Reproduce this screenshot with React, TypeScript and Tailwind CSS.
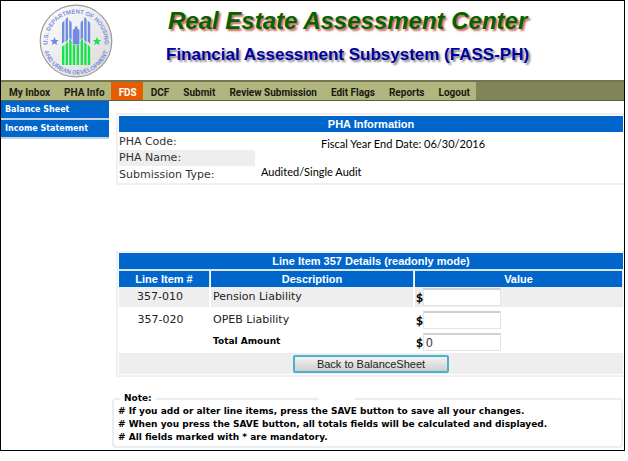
const navItems = ['My Inbox', 'PHA Info', 'FDS', 'DCF', 'Submit', 'Review Submission', 'Edit Flags', 'Reports', 'Logout'];

const notes = [
  '# If you add or alter line items, press the SAVE button to save all your changes.',
  '# When you press the SAVE button, all totals fields will be calculated and displayed.',
  '# All fields marked with * are mandatory.',
];

const verdana = "font-['DejaVu_Sans',Verdana,sans-serif]";
const arial = "font-['Liberation_Sans',Arial,sans-serif]";
const roboto = 'font-[Roboto,Arial,sans-serif]';
const calibri = 'font-[Lato,Calibri,sans-serif]';

function Seal() {
  return (
    <svg viewBox="0 0 74 74" className="size-[74px] shrink-0" role="img" aria-label="U.S. Department of Housing and Urban Development">
      <defs>
        <linearGradient id="sealFill" x1="0" y1="0" x2="1" y2="1">
          <stop offset="0" stopColor="#ffffff" />
          <stop offset="1" stopColor="#d9d9d9" />
        </linearGradient>
        <path id="arcTop" d="M10.2 47.8 A28.5 28.5 0 1 1 63.8 47.8" />
        <path id="arcBottom" d="M3.8 42 A33.6 33.6 0 0 0 70.2 42" />
      </defs>
      <circle cx="37" cy="37" r="35.8" fill="url(#sealFill)" stroke="#9a9a9a" strokeWidth="1.2" />
      <g fill="#7c90dc" fontFamily="Liberation Sans, Arial, sans-serif" fontSize="6" fontWeight="700">
        <text>
          <textPath href="#arcTop" startOffset="50%" textAnchor="middle">U.S. DEPARTMENT OF HOUSING</textPath>
        </text>
        <text>
          <textPath href="#arcBottom" startOffset="50%" textAnchor="middle">AND URBAN DEVELOPMENT</textPath>
        </text>
      </g>
      <g fill="#6f8be6">
        <path d="M23 19 L25.4 16.5 V37.5 L23 40Z M26.6 15 L29 13 V36 L26.6 38.5Z M30.2 16 L32.6 18.5 V36 L30.2 34Z" />
        <path d="M41.6 18.5 L44 16 V34 L41.6 36Z M45.2 13 L47.6 15 V38.5 L45.2 36Z M48.8 16.5 L51.2 19 V40 L48.8 37.5Z" />
        <path d="M33.8 26 L35.8 24.5 V22.5 H38.4 V24.5 L40.4 26 V40.5 H33.8Z" />
        <path d="M15.5 33 l1.2 2.9 3.1.2 -2.4 2 .8 3 -2.7-1.6 -2.7 1.6 .8-3 -2.4-2 3.1-.2Z" />
      </g>
      <g fill="#19e34a">
        <path d="M23 43 L25.4 40.5 V61 H23Z M26.6 40 L29 37.7 V61 H26.6Z M30.2 34.5 L32.6 37 V61 H30.2Z M33.8 41 H36.2 V61 H33.8Z M37.6 41 H40 V61 H37.6Z" />
        <path d="M41.6 37 L44 34.5 V61 H41.6Z M45.2 37.7 L47.6 40 V61 H45.2Z M48.8 40.5 L51.2 43 V61 H48.8Z" />
        <path d="M58 33 l1.2 2.9 3.1.2 -2.4 2 .8 3 -2.7-1.6 -2.7 1.6 .8-3 -2.4-2 3.1-.2Z" />
      </g>
    </svg>
  );
}

function Amount({ id, label, value }: { id: string; label: string; value: string }) {
  return (
    <div className="flex h-5 items-center pl-px">
      <span className={`${calibri} w-[7px] pt-0.5 text-xs leading-4 font-black text-black`}>$</span>
      <input
        id={id}
        aria-label={label}
        readOnly
        defaultValue={value}
        className={`${arial} h-[18px] w-[78px] border border-t-2 border-[#e3e3ea] border-t-[#cfcfd4] bg-white px-0.5 text-xs text-[#333]`}
      />
    </div>
  );
}

export default function App() {
  return (
    <div className={`${verdana} mr-[3px] border border-black bg-white text-[11px] text-[#222]`}>
      <header className="flex h-[79px] items-start pl-[38px]">
        <div className="pt-[3px]">
          <Seal />
        </div>
        <div className={`${arial} pl-[53px] font-bold whitespace-nowrap`}>
          <h1 className="pt-1.5 pl-0.5 text-2xl leading-7 text-[#006400] italic [text-shadow:2px_2px_2px_#d06060]">Real Estate Assessment Center</h1>
          <h2 className="pt-2 text-[17px] leading-6 text-[#0000a0] [text-shadow:2px_2px_2px_#888]">Financial Assessment Subsystem (FASS-PH)</h2>
        </div>
      </header>

      <nav className="border-t-2 border-b border-t-[#74764f] border-b-[#5f6144] bg-[#81835a]">
        <ul className="flex">
          {navItems.map((item) => (
            <li key={item} className="flex">
              <a
                href="#"
                className={`${roboto} pt-1 pr-1.5 pl-2 text-[10px] leading-[14px] font-bold whitespace-nowrap ${item === 'FDS' ? 'bg-[#e65c00] text-white' : 'bg-[#b1b57e] text-[#1a1a10]'}`}
              >
                {item}
              </a>
            </li>
          ))}
        </ul>
      </nav>

      <div className="flex pb-0.5">
        <aside className="w-[108px] shrink-0 text-[8px] font-bold text-white">
          {['Balance Sheet', 'Income Statement'].map((item) => (
            <a key={item} href="#" className="block h-[19px] border-b-2 border-[#c3d3e6] bg-[#0066cc] pl-1 leading-[17px] whitespace-nowrap">
              {item}
            </a>
          ))}
        </aside>

        <main className="min-w-0 grow pt-3 pl-[3px]">
          <section className="ml-1 border-2 border-r-0 border-[#f0f0f0] p-px">
            <h3 className={`${arial} h-4 bg-[#0066cc] text-center text-[11px] leading-4 font-bold text-white`}>PHA Information</h3>
            <div className="flex h-[50px] pt-0.5">
              <dl className="w-[136px] text-[#333]">
                <dt className="h-4 leading-4">PHA Code:</dt>
                <dt className="h-4 bg-[#eeeeee] leading-4">PHA Name:</dt>
                <dt className="h-4 leading-[18px]">Submission Type:</dt>
              </dl>
              <div className={`${calibri} pl-1.5 text-[11px] text-black`}>
                <p className="pt-0.5 pl-[60px] leading-4">Fiscal Year End Date: 06/30/2016</p>
                <p className="pt-3 leading-4">Audited/Single Audit</p>
              </div>
            </div>
          </section>

          <section className="mt-[66px] ml-1 border-2 border-r-0 border-[#f0f0f0] pb-px">
            <table className="w-full table-fixed border-separate border-spacing-x-px border-spacing-y-0">
              <colgroup>
                <col className="w-[91px]" />
                <col className="w-[203px]" />
                <col />
              </colgroup>
              <thead className={`${arial} text-[11px] leading-4 text-white`}>
                <tr>
                  <th colSpan={3} className="border-b-2 border-[#dce4f4] bg-[#0066cc] p-0">Line Item 357 Details (readonly mode)</th>
                </tr>
                <tr>
                  {['Line Item #', 'Description', 'Value'].map((h) => (
                    <th key={h} className="border-r border-[#dce4f4] bg-[#0066cc] p-0">{h}</th>
                  ))}
                </tr>
              </thead>
              <tbody>
                <tr className="h-[22px]">
                  <td className="border-r border-b-2 border-white bg-[#eeeeee] p-0 pr-2 text-center">357-010</td>
                  <td className="border-r border-b-2 border-white bg-[#eeeeee] p-0 pl-0.5">Pension Liability</td>
                  <td className="border-b-2 border-white bg-[#eeeeee] p-0"><Amount id="pension" label="Pension Liability" value="" /></td>
                </tr>
                <tr className="h-[22px]">
                  <td className="p-0 pr-2 text-center">357-020</td>
                  <td className="p-0 pl-0.5">OPEB Liability</td>
                  <td className="p-0"><Amount id="opeb" label="OPEB Liability" value="" /></td>
                </tr>
                <tr className="h-[22px]">
                  <td className="p-0" />
                  <td className="p-0 pl-0.5 text-[9px] font-bold text-black"><label htmlFor="total">Total Amount</label></td>
                  <td className="p-0"><Amount id="total" label="Total Amount" value="0" /></td>
                </tr>
                <tr className="h-[21px]">
                  <td colSpan={3} className="bg-[#eeeeee] p-0">
                    <button
                      type="button"
                      className={`${arial} mx-auto block h-[18px] w-[156px] rounded-xs border-2 border-[#4fb0cc] bg-linear-to-b from-[#f2f2f2] to-[#cfcfcf] text-[11px] leading-[14px] text-[#222]`}
                    >
                      Back to BalanceSheet
                    </button>
                  </td>
                </tr>
              </tbody>
            </table>
          </section>

          <fieldset className="relative mt-[15px] mr-px rounded-sm border-2 border-[#e9eef3] px-1 pb-0.5 text-[9px] font-bold text-black">
            <legend className="ml-0.5 px-1 leading-[13px]">Note:</legend>
            <span className="absolute -top-2 left-[205px] h-1.5 w-9 bg-white" />
            {notes.map((note) => (
              <p key={note} className="leading-[13px] whitespace-nowrap">{note}</p>
            ))}
          </fieldset>
        </main>
      </div>
    </div>
  );
}
